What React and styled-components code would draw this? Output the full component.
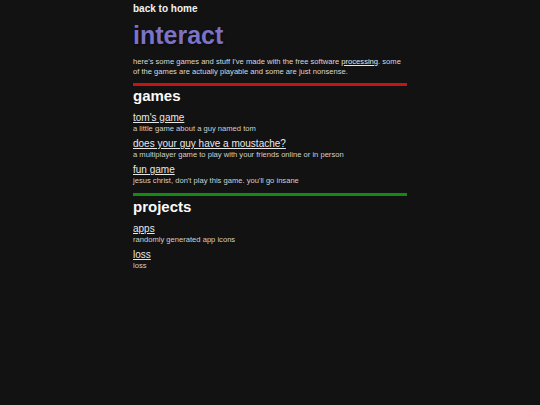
import styled, { createGlobalStyle } from "styled-components";

const Global = createGlobalStyle`
  html, body {
    margin: 0;
    background: #121212;
    font-family: "Liberation Sans", Arial, sans-serif;
    color: #d8d8d8;
  }
`;

const Page = styled.main`
  width: 274px;
  margin: 0 auto;
  padding-top: 3px;
`;

const BackLink = styled.a`
  display: block;
  color: #f2f2f2;
  font-weight: bold;
  font-size: 10px;
  line-height: 12px;
  text-decoration: none;
`;

const Title = styled.h1`
  margin: 7px 0 0;
  font-size: 25px;
  line-height: 26px;
  color: #7c73c6;
  text-shadow: 1px 1px 2px rgba(0, 0, 0, 0.6);
`;

const Intro = styled.p`
  margin: 9px 0 0;
  font-size: 7.6px;
  line-height: 9.5px;
  a {
    color: #e6e6e6;
  }
`;

const Rule = styled.hr`
  margin: 0;
  border: none;
  height: 3px;
  background: ${(p) => p.$color};
  margin-top: ${(p) => p.$top}px;
`;

const Heading = styled.h2`
  margin: ${(p) => p.$top}px 0 0;
  font-size: 15px;
  line-height: 18px;
  color: #fafafa;
`;

const List = styled.div`
  display: flex;
  flex-direction: column;
  gap: 5px;
  margin-top: 7px;
`;

const Item = styled.div`
  display: flex;
  flex-direction: column;
`;

const ItemLink = styled.a`
  color: #e8e8e8;
  font-size: 10px;
  line-height: 12px;
  text-decoration: underline;
`;

const ItemDesc = styled.span`
  font-size: 7.6px;
  line-height: 9px;
  color: #d0d0d0;
`;

const games = [
  { title: "tom's game", desc: "a little game about a guy named tom" },
  {
    title: "does your guy have a moustache?",
    desc: "a multiplayer game to play with your friends online or in person",
  },
  { title: "fun game", desc: "jesus christ, don't play this game. you'll go insane" },
];

const projects = [
  { title: "apps", desc: "randomly generated app icons" },
  { title: "loss", desc: "loss" },
];

function Section({ items }) {
  return (
    <List>
      {items.map((item, index) => (
        <Item key={index}>
          <ItemLink href="#">{item.title}</ItemLink>
          <ItemDesc>{item.desc}</ItemDesc>
        </Item>
      ))}
    </List>
  );
}

export default function App() {
  return (
    <>
      <Global />
      <Page>
        <BackLink href="#">back to home</BackLink>
        <Title>interact</Title>
        <Intro>
          here's some games and stuff I've made with the free software{" "}
          <a href="#">processing</a>. some of the games are actually playable
          and some are just nonsense.
        </Intro>
        <Rule $color="#c41414" $top={7} />
        <Heading $top={1}>games</Heading>
        <Section items={games} />
        <Rule $color="#138a13" $top={8} />
        <Heading $top={2}>projects</Heading>
        <Section items={projects} />
      </Page>
    </>
  );
}
